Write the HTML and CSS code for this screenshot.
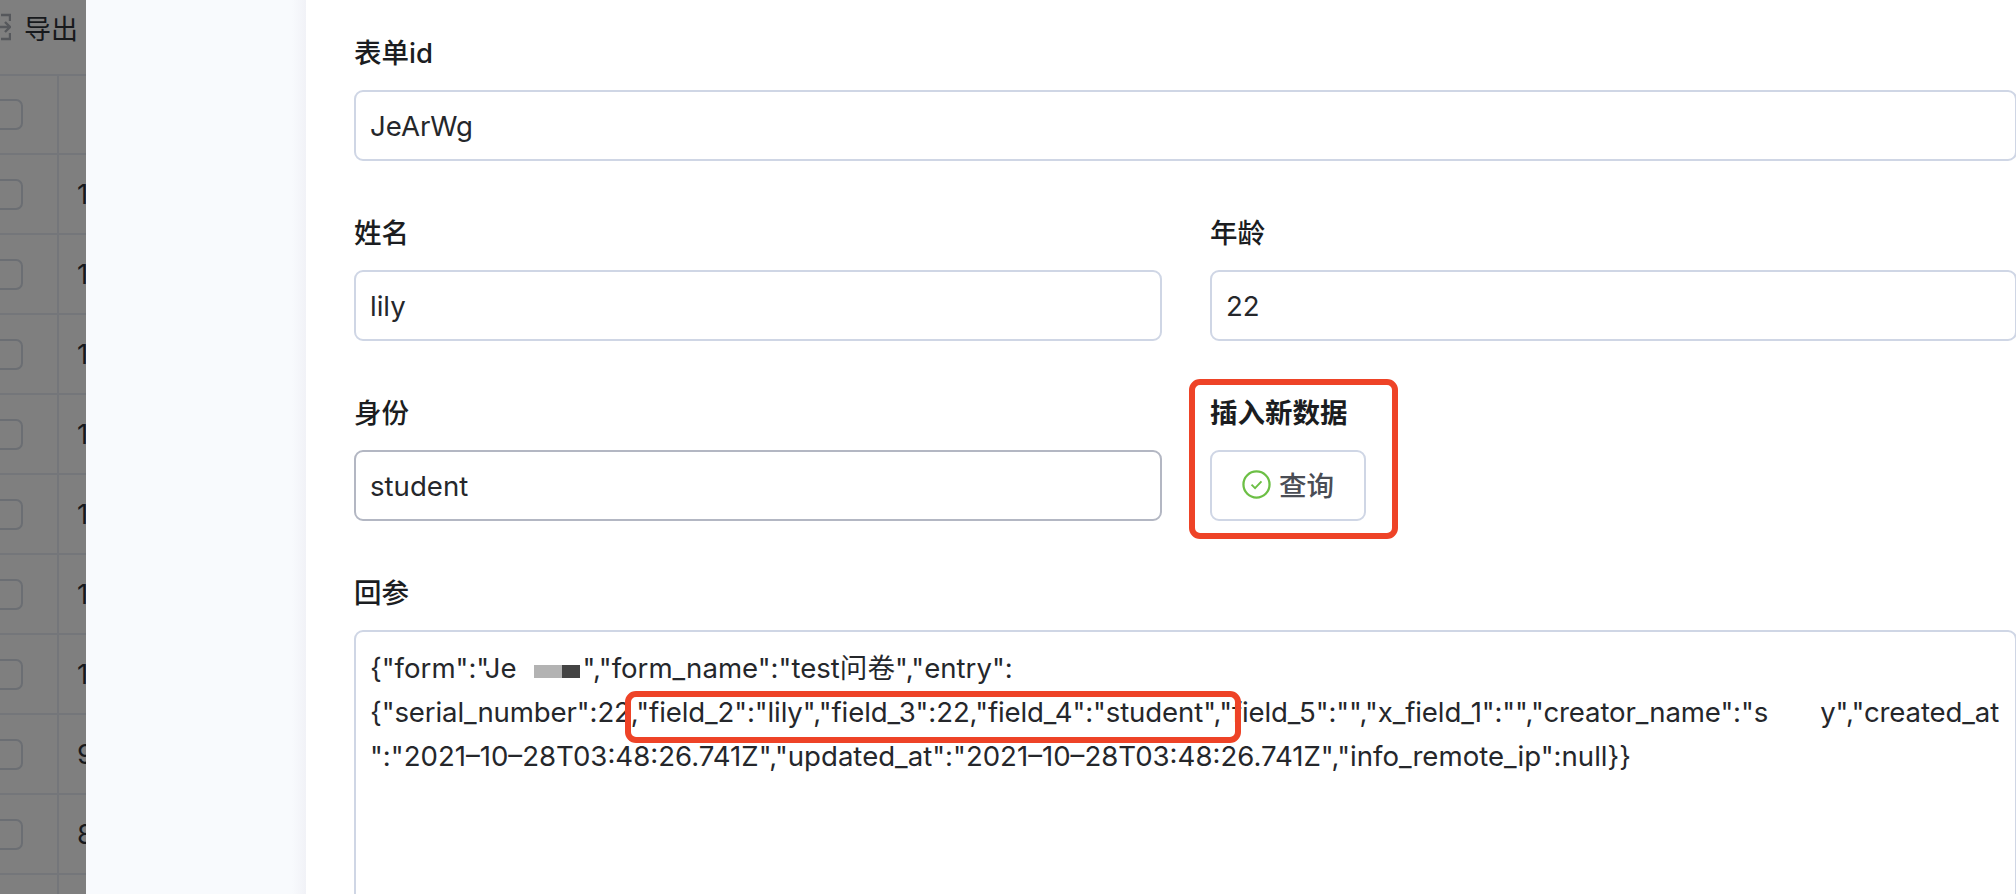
FILE: index.html
```html
<!DOCTYPE html>
<html lang="zh-CN">
<head>
<meta charset="utf-8">
<title>插入新数据</title>
<link rel="stylesheet" href="styles.css">
</head>
<body>
<div class="page">
  <section class="backdrop">
    <div class="toolbar">
      <svg class="export-icon" viewBox="0 0 24 28" width="24" height="28" fill="none" stroke="#56585c" stroke-width="2.4"><path d="M14 2H23V8M23 20V26H14M9 14H23M18 9l5 5-5 5"/></svg>
      <span>导出</span>
    </div>
    <div class="row head"><div class="cell-check"><i class="box"></i></div><div class="cell-num"></div></div>
    <div class="row"><div class="cell-check"><i class="box"></i></div><div class="cell-num">16</div></div>
    <div class="row"><div class="cell-check"><i class="box"></i></div><div class="cell-num">15</div></div>
    <div class="row"><div class="cell-check"><i class="box"></i></div><div class="cell-num">14</div></div>
    <div class="row"><div class="cell-check"><i class="box"></i></div><div class="cell-num">13</div></div>
    <div class="row"><div class="cell-check"><i class="box"></i></div><div class="cell-num">12</div></div>
    <div class="row"><div class="cell-check"><i class="box"></i></div><div class="cell-num">11</div></div>
    <div class="row"><div class="cell-check"><i class="box"></i></div><div class="cell-num">10</div></div>
    <div class="row"><div class="cell-check"><i class="box"></i></div><div class="cell-num">9</div></div>
    <div class="row"><div class="cell-check"><i class="box"></i></div><div class="cell-num">8</div></div>
    <div class="row"><div class="cell-check"><i class="box"></i></div><div class="cell-num"></div></div>
  </section>
  <aside class="rail"></aside>
  <main class="content">
    <div class="item">
      <div class="label">表单id</div>
      <div class="field">JeArWg</div>
    </div>
    <div class="grid">
      <div class="item">
        <div class="label">姓名</div>
        <div class="field">lily</div>
      </div>
      <div class="item">
        <div class="label">年龄</div>
        <div class="field">22</div>
      </div>
      <div class="item">
        <div class="label">身份</div>
        <div class="field hover">student</div>
      </div>
      <div class="item">
        <div class="label label-strong">插入新数据</div>
        <button class="btn" type="button">
          <svg viewBox="0 0 28 28" width="29" height="29" fill="none" stroke="#6cbf45" stroke-width="2.2"><circle cx="14" cy="14" r="12.6"/><path d="M9.2 14.2l3.4 3.4 6.2-6.6" stroke-width="1.8"/></svg>
          <span>查询</span>
        </button>
      </div>
    </div>
    <div class="item">
      <div class="label">回参</div>
      <div class="field area">{"form":"J<span>e<i class="blank"></i><i class="gray"></i><i class="dark"></i></span>","form_name":"test问卷","entry":<br><span class="tight">{"serial_number":22,"field_2":"lily","field_3":22,"field_4":"student","field_5":"","x_field_1":"","creator_name":"s<i class="blank-b"></i>y","created_at</span><br>":"2021–10–28T03:48:26.741Z","updated_at":"2021–10–28T03:48:26.741Z","info_remote_ip":null}}</div>
    </div>
  </main>
  <div class="mark mark-btn"></div>
  <div class="mark mark-json"></div>
</div>
</body>
</html>
```
FILE: styles.css
```css
* { box-sizing: border-box; }
html, body { margin: 0; height: 100%; overflow: hidden; background: #fff; }
body { font-family: Inter, "Noto Sans CJK SC", sans-serif; }
.page { position: relative; display: flex; width: 2016px; height: 894px; overflow: hidden; }

.backdrop { flex: 0 0 86px; width: 86px; overflow: hidden; background: #7f7f7f; color: #17191c; }
.toolbar { display: flex; align-items: center; gap: 13px; height: 74px; margin-left: -13px; padding-bottom: 20px; font-size: 27px; white-space: nowrap; }
.export-icon { flex: none; }
.row { display: flex; height: 80px; border-top: 2px solid #74767a; }
.row.head { height: 79px; }
.cell-check { flex: 0 0 59px; display: flex; align-items: center; border-right: 2px solid #74767a; }
.box { display: block; flex: none; width: 42px; height: 31px; margin-left: -19px; border: 2px solid #6b6e73; border-radius: 7px; }
.cell-num { padding-left: 18px; font-size: 27.4px; line-height: 78px; white-space: nowrap; }

.rail { flex: 0 0 220px; width: 220px; background: linear-gradient(to right, #f8fafd 0, #f8fafd 206px, #f1f2f7 220px); }

.content { flex: 0 0 1711px; width: 1711px; padding: 32px 0 0 48px; background: #fff; }
.item { margin-bottom: 51px; }
.label { height: 42px; margin-bottom: 16px; font-size: 27.5px; font-weight: 500; line-height: 42px; color: #1b1d21; }
.label-strong { font-weight: 600; }
.field { height: 71px; padding: 0 14px; border: 2px solid #cfd6e5; border-radius: 9px; font-size: 27.6px; line-height: 68px; color: #25272b; white-space: nowrap; overflow: hidden; }
.field.hover { border-color: #b3b7c3; }
.grid { display: grid; grid-template-columns: 808px 1fr; column-gap: 48px; }
.btn { display: inline-flex; align-items: center; justify-content: center; gap: 8px; width: 156px; height: 71px; padding: 0 0 3px; border: 2px solid #cfd6e5; border-radius: 9px; background: #fff; font: inherit; font-size: 27.5px; font-weight: 500; color: #4a4d55; }
.area { height: 360px; padding-top: 14px; line-height: 44px; }
.tight { letter-spacing: -0.12px; }

.blank { display: inline-block; width: 17px; }
.gray { display: inline-block; width: 28px; height: 13px; background: #b3b3b3; }
.dark { display: inline-block; width: 18px; height: 13px; margin-right: 3px; background: #444; }
.blank-b { display: inline-block; width: 52px; }

.mark { position: absolute; border: 6px solid #ee4327; border-radius: 11px; }
.mark-btn { left: 1189px; top: 379px; width: 209px; height: 160px; }
.mark-json { left: 625px; top: 691px; width: 616px; height: 52px; }
```
